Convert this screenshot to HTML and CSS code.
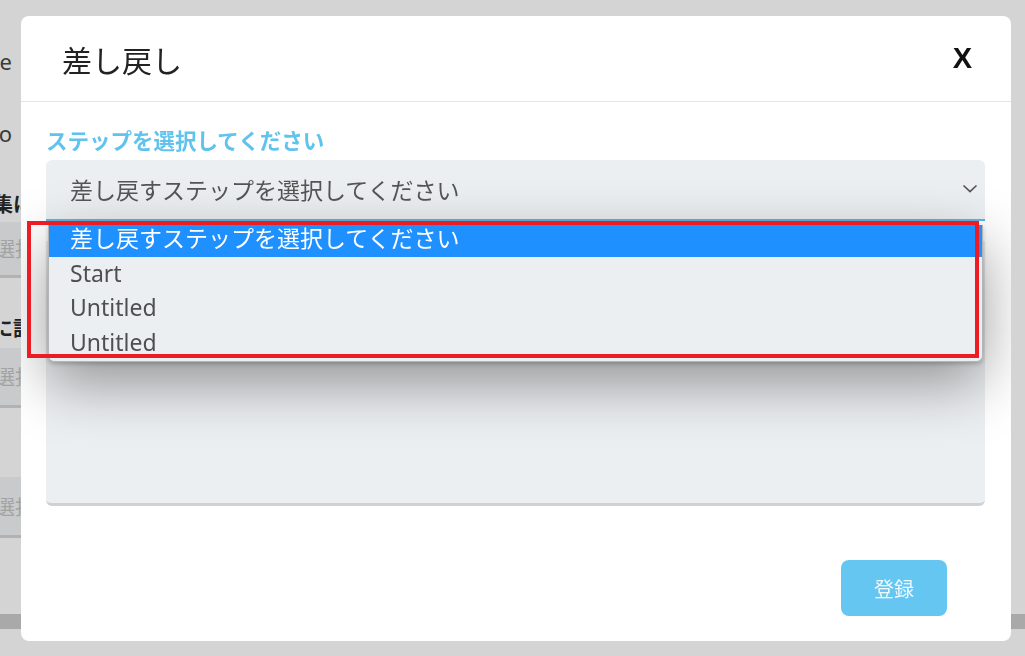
FILE: index.html
```html
<!DOCTYPE html>
<html lang="ja">
<head>
    <meta charset="UTF-8">
    <meta name="viewport" content="width=device-width, initial-scale=1.0">
    <title>差し戻し</title>
    <link rel="stylesheet" href="styles.css">
</head>
<body>
    <div class="page">
        <div class="page-line"><span class="clip">Title</span></div>
        <div class="page-line second"><span class="clip">Memo</span></div>
        <div class="page-line third bold"><span class="clip wide">編集に</span></div>
        <div class="page-field"><span>選択してください</span></div>
        <div class="page-line fourth bold"><span class="clip wider">的に記入</span></div>
        <div class="page-field second-field"><span>選択してください</span></div>
        <div class="page-field third-field"><span>選択してください</span></div>
        <div class="page-band"></div>
    </div>

    <div class="backdrop">
        <div class="modal">
            <div class="modal-header">
                <h2 class="modal-title">差し戻し</h2>
                <span class="modal-close">X</span>
            </div>

            <div class="modal-body">
                <label class="step-label">ステップを選択してください</label>
                <div class="step-field">
                    <div class="step-select">
                        <span>差し戻すステップを選択してください</span>
                        <svg class="chevron" width="16" height="9" viewBox="0 0 16 9">
                            <path d="M1.5 1.5 L8 7.5 L14.5 1.5" fill="none" stroke="#555" stroke-width="1.7"/>
                        </svg>
                    </div>
                    <div class="step-options">
                        <div class="step-list">
                            <div class="step-option selected">差し戻すステップを選択してください</div>
                            <div class="step-option">Start</div>
                            <div class="step-option">Untitled</div>
                            <div class="step-option">Untitled</div>
                        </div>
                    </div>
                    <div class="comment-box"></div>
                </div>
            </div>

            <div class="modal-footer">
                <button class="submit-button">登録</button>
            </div>
        </div>
    </div>

    <div class="annotation"></div>
</body>
</html>
```

FILE: styles.css
```css
body {
    margin: 0;
    font-family: "Noto Sans", "Noto Sans CJK JP", sans-serif;
    background-color: #d4d4d4;
    overflow: hidden;
}
.page {
    height: 656px;
    padding-top: 44px;
    box-sizing: border-box;
}
.page-line {
    height: 34px;
    line-height: 34px;
    font-size: 22px;
    color: #3a3a3a;
}
.page-line.second {
    margin-top: 38px;
}
.page-line.third {
    margin-top: 38px;
}
.page-line.fourth {
    margin-top: 34px;
}
.page-line.bold {
    font-weight: bold;
    font-size: 20px;
    color: #222;
}
.clip {
    display: block;
    width: 12px;
    overflow: hidden;
    white-space: nowrap;
    direction: rtl;
}
.clip.wide {
    width: 33px;
}
.clip.wider {
    width: 53px;
}
.page-field {
    width: 600px;
    height: 53px;
    background-color: #c8cacb;
    border-bottom: 3px solid #b2b2b2;
    display: flex;
    align-items: center;
    font-size: 20px;
    color: #a2a2a2;
    overflow: hidden;
    white-space: nowrap;
}
.page-field span {
    margin-left: -5px;
}
.page-field.second-field {
    margin-top: 2px;
    height: 57px;
}
.page-field.third-field {
    margin-top: 69px;
    height: 58px;
}
.page-band {
    margin-top: 76px;
    height: 15px;
    background-color: #a9a9a9;
}

.backdrop {
    position: fixed;
    top: 0;
    left: 0;
    right: 0;
    bottom: 0;
    padding: 16px 14px 15px 21px;
    box-sizing: border-box;
    display: flex;
}
.modal {
    flex: 1;
    background-color: white;
    border-radius: 8px;
    display: flex;
    flex-direction: column;
    overflow: hidden;
}
.modal-header {
    height: 86px;
    box-sizing: border-box;
    border-bottom: 1px solid #e5e5e5;
    padding: 0 39px 0 41px;
    display: flex;
    align-items: center;
    justify-content: space-between;
}
.modal-title {
    margin: 0;
    font-size: 30px;
    font-weight: normal;
    color: #222;
}
.modal-close {
    font-family: "Liberation Sans", Arial, sans-serif;
    font-weight: bold;
    font-size: 29px;
    color: #111;
}
.modal-body {
    padding: 24px 26px 0 25px;
}
.step-label {
    display: block;
    font-size: 21.5px;
    font-weight: bold;
    line-height: 30px;
    color: #5fc3ee;
    margin-bottom: 4px;
}
.step-field {
    position: relative;
}
.step-select {
    height: 61px;
    box-sizing: border-box;
    background-color: #eceff1;
    border-radius: 6px 6px 0 0;
    border-bottom: 2px solid #5ab8e2;
    padding: 0 7px 2px 24px;
    display: flex;
    align-items: center;
    justify-content: space-between;
    font-size: 23px;
    color: #555;
}
.step-options {
    position: absolute;
    top: 65px;
    left: 2px;
    right: 2px;
    height: 137px;
    box-sizing: border-box;
    overflow: hidden;
    background-color: #eceff1;
    border: 1px solid #b4b4b4;
    border-top: none;
    border-radius: 0 0 6px 6px;
    box-shadow: 0 20px 60px rgba(0, 0, 0, 0.4), 0 2px 4px rgba(0, 0, 0, 0.2);
    z-index: 2;
}
.step-list {
    margin-top: -3px;
}
.step-option {
    height: 34.5px;
    line-height: 33px;
    padding-left: 21px;
    font-size: 23px;
    color: #4f4f4f;
    white-space: nowrap;
}
.step-option.selected {
    background-color: #1e90ff;
    color: white;
}
.comment-box {
    margin-top: 20px;
    height: 265px;
    box-sizing: border-box;
    background-color: #eceff1;
    border-bottom: 3px solid #d1d1d1;
    border-radius: 0 0 6px 6px;
}
.modal-footer {
    margin-top: auto;
    display: flex;
    justify-content: flex-end;
    padding: 0 64px 25px 0;
}
.submit-button {
    width: 106px;
    height: 56px;
    border: none;
    border-radius: 8px;
    background-color: #66c6f2;
    color: #eef8fd;
    font-family: "Noto Sans CJK JP", sans-serif;
    font-size: 20px;
}
.annotation {
    position: absolute;
    left: 27px;
    top: 221px;
    width: 952px;
    height: 137px;
    box-sizing: border-box;
    border: 4px solid #ed1c24;
    z-index: 5;
}
```
